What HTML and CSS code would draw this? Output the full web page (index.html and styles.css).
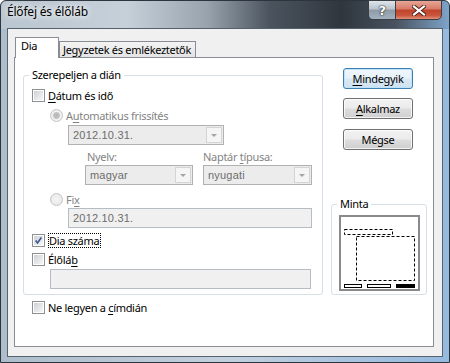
FILE: index.html
```html
<!DOCTYPE html>
<html>
<head>
<meta charset="utf-8">
<title>Élőfej és élőláb</title>
<link rel="stylesheet" href="styles.css">
</head>
<body>
<div class="window">
	<div class="titlebar">
		<span class="title">Élőfej és élőláb</span>
		<div class="caption">
			<span class="cap-btn help">?</span>
			<span class="cap-btn close">
				<svg width="14" height="11" viewBox="0 0 14 11">
					<path d="M2 1.5 L12 9.5 M12 1.5 L2 9.5" stroke="#4a1f18" stroke-width="4" stroke-linecap="square"/>
					<path d="M2 1.5 L12 9.5 M12 1.5 L2 9.5" stroke="#fff" stroke-width="2.2" stroke-linecap="square"/>
				</svg>
			</span>
		</div>
	</div>
	<div class="client">
		<div class="tabs">
			<span class="tab active">Dia</span>
			<span class="tab">Jegyzetek és emlékeztetők</span>
		</div>
		<div class="panel">
			<div class="left">
				<fieldset class="group main-group">
					<legend>Szerepeljen a dián</legend>
					<div class="check"><span class="box"></span><span><u>D</u>átum és idő</span></div>
					<div class="check radio-row disabled"><span class="radio on"></span><span>A<u>u</u>tomatikus frissítés</span></div>
					<div class="combo date-combo"><span class="combo-text">2012.10.31.</span><span class="combo-arrow"></span></div>
					<div class="lang-grid">
						<span class="small-label first">Nyelv:</span>
						<span class="small-label">Naptár <u>t</u>ípusa:</span>
						<div class="combo"><span class="combo-text">magyar</span><span class="combo-arrow"></span></div>
						<div class="combo"><span class="combo-text">nyugati</span><span class="combo-arrow"></span></div>
					</div>
					<div class="check radio-row disabled fix-row"><span class="radio"></span><span>Fi<u>x</u></span></div>
					<div class="field date-field">2012.10.31.</div>
					<div class="check slide-row">
						<span class="box">
							<svg width="11" height="11" viewBox="0 0 11 11"><path d="M2 5.5 L4.3 8.5 L9 1.8" fill="none" stroke="#3f5690" stroke-width="2"/></svg>
						</span>
						<span class="focus">Dia száma</span>
					</div>
					<div class="check footer-row"><span class="box"></span><span>Élőlá<u>b</u></span></div>
					<div class="field footer-field"></div>
				</fieldset>
				<div class="check title-row"><span class="box"></span><span>Ne legyen a <u>c</u>ímdián</span></div>
			</div>
			<div class="right">
				<span class="btn default"><u>M</u>indegyik</span>
				<span class="btn"><u>A</u>lkalmaz</span>
				<span class="btn">Mégse</span>
				<fieldset class="group minta">
					<legend>Minta</legend>
					<svg class="preview" width="81" height="76" viewBox="0 0 81 76">
						<rect x="1" y="1" width="79" height="74" fill="#fff" stroke="#8a8a8a" stroke-width="2"/>
						<rect x="5.5" y="14.5" width="48" height="5" fill="none" stroke="#000" stroke-dasharray="3 2"/>
						<rect x="17.5" y="21.5" width="58" height="44" fill="none" stroke="#000" stroke-dasharray="3 2"/>
						<rect x="5.5" y="69.5" width="17" height="3" fill="#fff" stroke="#000"/>
						<rect x="28.5" y="69.5" width="23" height="3" fill="#fff" stroke="#000"/>
						<rect x="57" y="69" width="19" height="4" fill="#000"/>
					</svg>
				</fieldset>
			</div>
		</div>
	</div>
</div>
</body>
</html>
```

FILE: styles.css
```css
*{ box-sizing:border-box; }
body{ margin:0; font-family:"Noto Sans", sans-serif; font-size:11px; letter-spacing:-0.3px; color:#000; }
u{ text-decoration-thickness:1px; text-underline-offset:2px; }

/* ablak keret */
.window{ width:450px; height:363px; display:flex; flex-direction:column; border:1px solid #2c343c; border-radius:6px 6px 0 0;
	background:
		linear-gradient(to right, #b9c5d0 0%, #c6d0d9 28%, #98a3ae 46%, #4b545e 60%, #2f363e 76%, #48525e 88%, #7ea4ca 100%) top / 100% 28px no-repeat,
		linear-gradient(to right, #aebdcb 0%, #c3d1df 50%, #95badf 100%); }
.titlebar{ height:27px; display:flex; justify-content:space-between; align-items:flex-start; }
.title{ padding:3px 0 0 6px; font-size:12px; letter-spacing:-0.2px; line-height:16px; text-shadow:0 0 6px #fff, 0 0 10px #fff; }
.caption{ display:flex; margin:-1px 7px 0 0; }
.cap-btn{ height:20px; display:flex; align-items:center; justify-content:center; border:1px solid #3a3f45; }
.help{ width:27px; border-right:0; border-radius:0 0 0 5px; color:#fff; font:bold 13px "DejaVu Sans", sans-serif; text-shadow:0 0 2px #222, 0 0 1px #000;
	background:linear-gradient(#dfe5ea 0%, #b9c3cd 45%, #8e9aa6 50%, #a3b1be 100%); }
.close{ width:47px; border-radius:0 0 5px 0;
	background:linear-gradient(#e7a696 0%, #d67a67 45%, #c2432b 50%, #c9553c 80%, #e2907a 100%); }

.client{ flex:1; margin:0 6px 5px; border:1px solid #56626e; background:#f0f0f0; }

/* fulek */
.tabs{ display:flex; align-items:flex-end; height:20px; margin:8px 0 0 7px; }
.tab{ height:16px; width:137px; padding-left:3px; line-height:15px; border:1px solid #898c95; border-bottom:0;
	background:linear-gradient(#f3f3f3, #e4e4e4); }
.tab.active{ width:44px; height:21px; padding-left:5px; margin-bottom:-1px; background:#fff; position:relative; z-index:1; }
.panel{ margin-left:6px; width:420px; height:290px; border:1px solid #898c95; background:#fff; display:flex; padding:10px 0 0 8px; }

/* csoportok */
.group{ margin:0; border:1px solid #d5dfe5; border-radius:3px; min-width:0; }
.group legend{ padding:0 3px; margin-left:-3px; line-height:14px; }
.main-group{ width:300px; padding:6px 0 5px 8px; }
.left{ width:300px; }
.right{ width:96px; margin-left:8px; display:flex; flex-direction:column; }

.check{ display:flex; align-items:center; gap:3px; height:15px; line-height:15px; }
.box{ width:13px; height:13px; border:1px solid #8e8f8f; padding:1px; display:flex; align-items:center; justify-content:center;
	background:linear-gradient(135deg, #cdd1d7, #f7f7f7) content-box, #fff; }
.radio{ width:13px; height:13px; border-radius:50%; border:1px solid #c4c4c4; background:radial-gradient(circle, #f4f4f4 0, #e6e6e6 100%); }
.radio.on{ background:radial-gradient(circle, #b4b4b4 0, #c4c4c4 3px, #f2f2f2 4px, #e8e8e8 100%); }
.disabled{ color:#838383; }
.radio-row{ margin:5px 0 0 18px; }
.fix-row{ margin-top:7px; }
.slide-row{ margin-top:5px; }
.footer-row{ margin-top:4px; }
.title-row{ margin:5px 0 0 9px; }
.focus{ border:1px dotted #000; line-height:13px; padding:0 1px 0 0; margin-left:0; }

/* legorduloi mezok */
.combo{ display:flex; height:20px; border:1px solid #b1b1b1; background:#ececec; padding:1px; }
.combo-text{ flex:1; padding-left:3px; line-height:16px; font-family:"Liberation Sans", sans-serif; letter-spacing:0.2px; color:#6d6d6d; }
.combo-arrow{ width:16px; border:1px solid #d4d4d4; background:#f5f5f5; display:flex; align-items:center; justify-content:center; }
.combo-arrow::after{ content:""; border-left:3px solid transparent; border-right:3px solid transparent; border-top:3px solid #a4a4a4; }
.date-combo{ width:156px; margin:2px 0 0 36px; }
.lang-grid{ display:grid; grid-template-columns:108px 109px; column-gap:10px; row-gap:1px; margin:4px 0 0 53px; }
.small-label{ color:#838383; line-height:15px; }
.small-label.first{ padding-left:2px; }

.field{ height:20px; border:1px solid #b5bcc4; background:#f0f0f0; padding-left:4px; line-height:18px; font-family:"Liberation Sans", sans-serif; letter-spacing:0.2px; color:#6d6d6d; }
.date-field{ width:244px; margin:1px 0 0 36px; }
.footer-field{ width:261px; margin:2px 0 0 18px; }

/* gombok */
.btn{ width:70px; height:21px; margin:0 0 0 12px; border:1px solid #707070; border-radius:3px; text-align:center; line-height:19px;
	background:linear-gradient(#f2f2f2 0%, #ebebeb 48%, #dddddd 52%, #cfcfcf 100%); box-shadow:inset 0 0 0 1px rgba(255,255,255,.75); }
.btn + .btn{ margin-top:9px; }
.btn + .btn + .btn{ margin-top:10px; }
.btn.default{ border-color:#3c7fb1; box-shadow:inset 0 0 0 1px #bfe4f9;
	background:linear-gradient(#f0f7fc 0%, #e7f1f9 48%, #d9e8f4 52%, #cfe1f0 100%); }

.minta{ margin-top:47px; width:96px; padding:4px 0 3px 7px; }
.minta legend{ margin-left:-2px; }
.preview{ display:block; }
```
